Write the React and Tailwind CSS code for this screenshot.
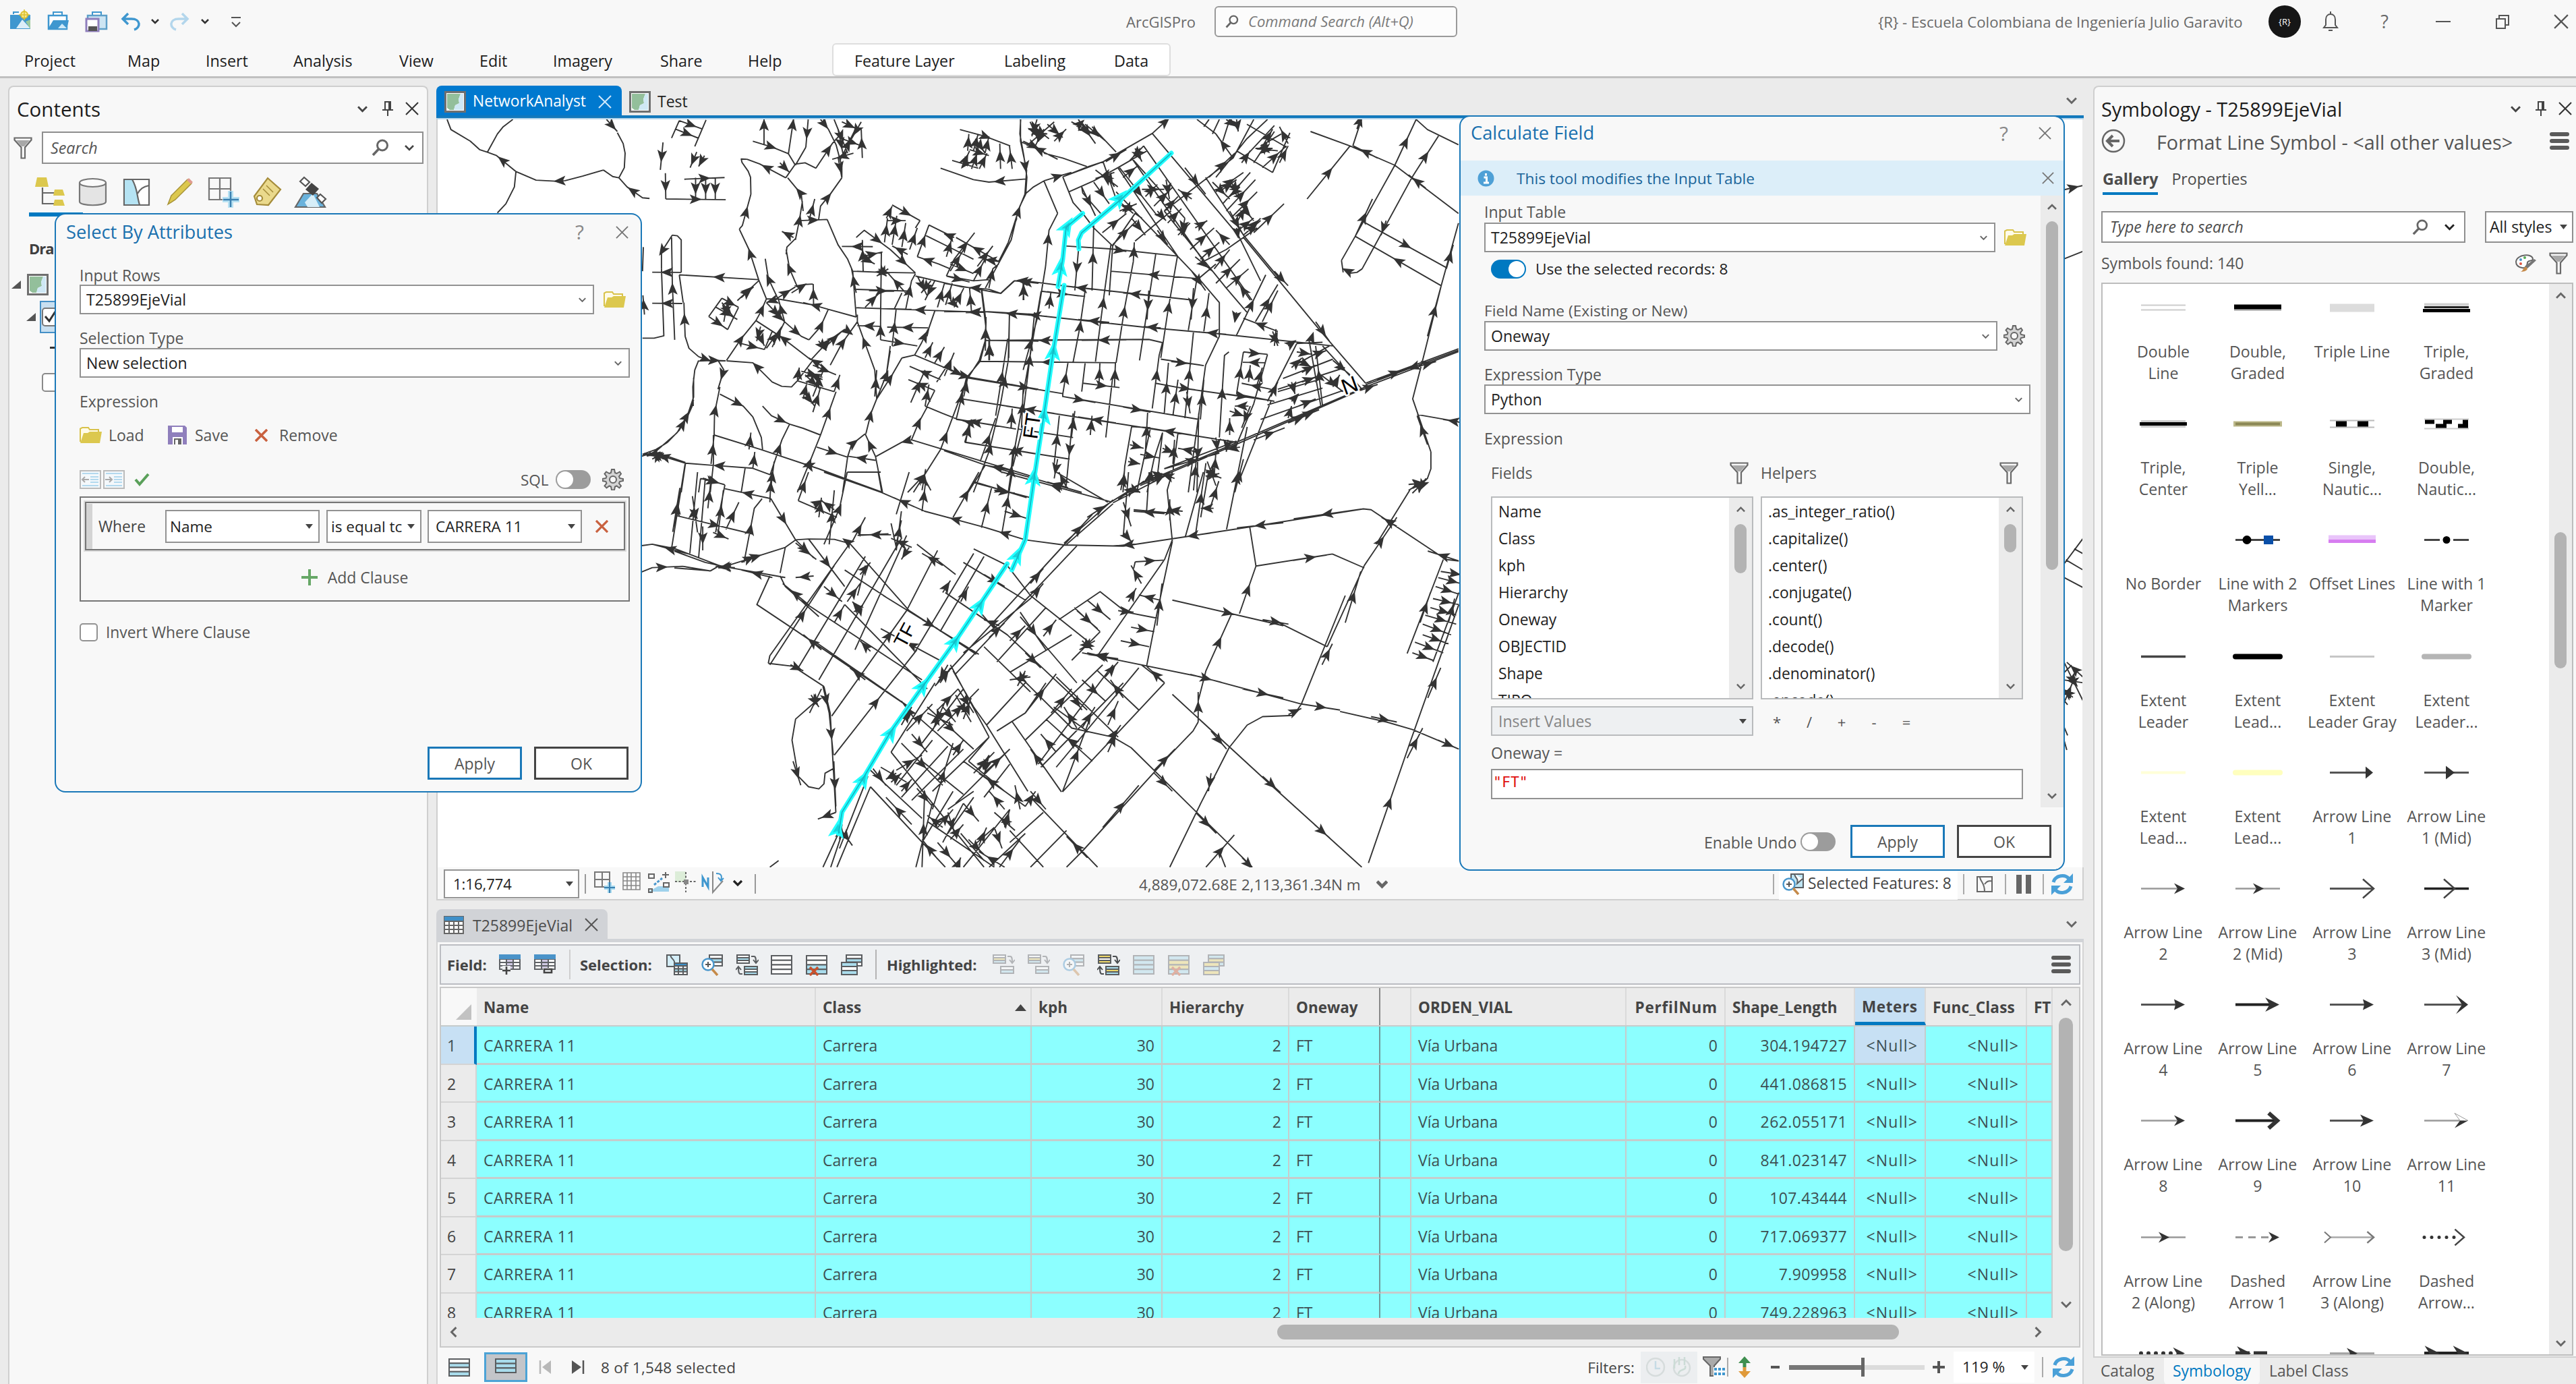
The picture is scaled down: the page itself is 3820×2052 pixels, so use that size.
import React from "react";

/* ---------- map data: "arrowCount x y x y ..." per tile ---------- */
const tiles = [
  {
    ox: 640, oy: 170, sx: 900 / 1568, sy: 560 / 1568,
    lines: `1 444 230 390 255 345 274 320 276 270 272 218 236
1 218 236 168 170 144 156
0 144 156 124 145 100 110 50 62 40 20
0 144 156 170 80 185 50 210 20
0 218 236 214 300 192 370 170 408
1 452 20 480 70
0 480 75 495 120 500 160 498 220 484 262
0 444 230 468 257 484 262
1 563 348 545 345 505 300 484 262
1 598 115 591 229
1 604 243 605 350
1 605 350 760 353
1 653 268 757 261
1 682 262 682 350
1 708 265 708 350
1 733 265 733 350
0 640 25 620 97
0 709 22 680 132
1 640 25 700 60
1 630 60 690 98
1 685 155 668 220
1 705 170 690 215
1 859 124 859 10 859 -40
1 830 110 880 135 922 162
0 922 162 940 210
1 922 162 935 20 935 -80
1 973 20 967 135
0 967 135 940 210
1 915 262 848 205 815 185
0 815 185 800 184 802 198 818 235 824 260 825 330
1 795 475 803 460 825 330
1 845 685 820 560 795 475
1 900 200 925 240
0 915 262 940 205 965 200 993 222
1 993 222 1035 120 1060 75
1 1005 20 1025 60
0 1025 60 1045 125 1060 215 1060 262
1 1050 175 1060 262
1 1000 435 1005 380 1030 330 1060 262
1 960 400 955 330 920 262
1 975 440 985 380 990 350
1 950 440 1022 435
0 1022 435 1050 540 1075 600 1088 650 1097 840
1 1097 740 1085 640
1 940 520 950 440 958 360
1 935 510 905 485
0 940 515 918 550 916 580
1 945 715 925 640 916 560
1 895 765 870 680 862 598
1 845 685 640 665
0 640 665 650 780
1 655 920 652 780
0 655 920 665 970 690 1005
1 690 1005 725 1025
1 700 1018 760 1022
1 645 655 570 654
1 648 784 570 783
0 645 655 645 520 635 503 622 500
1 622 500 594 570 594 640
0 594 640 600 918 575 928 545 928
1 628 935 622 700 620 510
0 547 550 545 650
1 550 830 546 750
1 762 1020 800 930 838 855
1 838 855 850 820 865 765
0 845 685 865 765 895 765
1 895 765 865 780
1 1025 808 985 790 960 780
0 895 765 985 790
0 1025 808 1097 840
1 890 765 940 715
1 930 740 965 705 985 703
1 987 790 986 703
1 975 935 1005 880 1025 808
1 912 860 955 920 975 935
1 790 772 845 690
1 800 760 832 715
1 716 838 765 892
0 716 838 750 762
1 750 762 793 800
0 793 800 765 892
1 735 800 790 850
1 750 780 780 840
1 765 770 755 860
1 865 780 912 860
1 885 820 912 860
1 912 860 895 760
0 838 855 905 925
1 980 1018 905 925 838 855
1 865 970 905 880
1 880 965 912 860
1 800 950 860 975
0 860 975 880 900
1 845 910 860 960
1 850 880 840 940
1 980 1018 1025 940 1068 890
1 1068 890 1085 910
1 1020 960 1060 900
1 1000 940 1020 980
1 1030 1040 1060 950 1100 860
1 905 1128 880 1110 830 1030 762 1022
0 905 1128 930 1130 945 1105
0 945 1105 985 1020
1 1010 1045 975 1010
1 985 1040 1045 1080
1 945 1100 950 1050
1 955 1065 1010 1090
1 965 1080 1005 1140
0 945 1105 1040 1150
1 1010 1100 985 1080 970 1070
1 1000 1135 1000 1080
0 1015 1050 985 1170
1 960 1180 970 1110
1 985 1235 1000 1160 1005 1130
1 960 1150 990 1210
1 1040 1150 1055 1080
1 1005 1330 1025 1240 1045 1150
1 855 1210 878 1250 925 1285 960 1302
0 960 1302 1005 1330
0 690 1020 680 1060 675 1130 676 1210
1 610 1360 640 1310 665 1240 676 1200
0 545 1410 580 1390 610 1360
1 740 1020 755 1060 740 1140
1 730 1330 731 1240 745 1130
1 745 1160 805 1210 830 1255
0 830 1255 852 1340 855 1390
1 722 1450 730 1330
1 820 1390 825 1320
0 730 1330 850 1390
1 1165 1568 1000 1470 850 1390 780 1355
1 656 1447 600 1420 545 1410
1 600 1430 560 1400
1 570 1430 600 1405
1 830 1468 720 1455 656 1447
0 830 1468 875 1495
1 875 1495 905 1350 925 1285
1 830 1468 835 1400
1 875 1568 885 1440
1 945 1568 975 1450 1005 1330
1 995 1380 1075 1422
1 1147 1435 1075 1418
1 1075 1420 1085 1370 1120 1325
1 1147 1420 1120 1325
0 1147 1420 1215 1360 1240 1350
1 1240 1350 1215 1360
0 720 1568 728 1450 728 1330
0 645 1568 656 1447
1 695 1510 755 1535
0 695 1510 690 1568
0 810 1468 800 1568
0 1147 1420 1165 1568
0 1075 1420 1062 1568
0 1088 650 1165 655 1250 657
1 1115 650 1113 520
1 1140 548 1060 547
1 1110 590 1165 570
1 1110 590 1145 620
0 1097 510 1118 480 1185 560
1 1118 480 1185 560
1 1185 560 1250 657
1 1170 530 1178 430
1 1190 540 1202 420
1 1215 550 1225 450
1 1235 560 1255 470
1 1175 430 1190 380
1 1190 375 1262 440
1 1178 440 1225 440
0 1262 440 1250 470
1 1230 580 1190 545
1 1255 590 1285 458
0 1285 458 1350 510
1 1350 510 1325 495
0 1275 500 1350 560 1400 600
1 1330 590 1345 510
1 1310 620 1255 590
0 1310 620 1340 640
1 1350 600 1403 490
1 1340 650 1375 560
1 1465 610 1355 510
1 1410 630 1450 545
1 1465 610 1425 600
0 1330 670 1400 690 1440 685
1 1340 620 1400 660
0 1330 670 1350 600
1 1330 670 1390 695
1 1400 690 1430 600
1 1440 720 1450 640 1465 620
0 1465 610 1490 530 1500 480 1512 430
1 1500 480 1520 380 1535 330
0 1250 670 1370 715 1440 725 1470 742 1505 690
1 1568 700 1505 690
1 1530 770 1528 690
1 1440 725 1370 715
0 1092 725 1240 733
1 1130 730 1195 733
0 1097 802 1240 808
1 1425 820 1100 802
1 1430 820 1380 822
1 1568 835 1430 818
0 1160 860 1162 570
1 1155 640 1175 670
1 1180 640 1150 670
1 1225 740 1180 660
0 1195 808 1215 740
1 1225 808 1240 690 1250 660
1 1120 800 1160 735
1 1255 670 1280 750
1 1290 690 1265 740
1 1300 690 1275 770
1 1307 800 1325 700
1 1328 790 1345 700
1 1350 800 1375 720
1 1395 820 1390 720
1 1340 770 1360 800
0 1420 725 1432 880 1430 940
1 1430 960 1432 860
1 1440 1020 1440 940
0 1430 940 1415 1020 1387 1090
0 1430 937 1568 940
0 1418 1024 1568 1027
0 1493 825 1490 1020 1470 1200
1 1283 885 1177 882
1 1160 879 1100 876
0 1300 815 1285 885 1280 920
1 1265 950 1283 890
1 1160 935 1255 960
1 1160 935 1160 860
1 1190 960 1200 810
0 1185 960 1175 1080
1 1145 1060 1120 950 1100 860 1100 830
0 1145 1060 1150 1180
1 1145 1170 1150 1060
1 1150 1180 1175 1080 1185 980
1 1150 1180 1190 1080 1215 1010
0 1215 1010 1248 998 1265 950
0 1248 998 1385 1090
1 1330 1050 1385 1090
1 1275 1010 1295 945
1 1300 1030 1325 965
1 1325 1085 1350 988
0 1305 1110 1345 1010
1 1315 1100 1235 1045
1 1300 1145 1232 1100
1 1238 1195 1275 1060
1 1275 1210 1285 1120
0 1300 1145 1280 1210
1 1122 1325 1135 1240 1150 1180
1 1240 1350 1258 1280 1280 1215
0 1275 1210 1320 1240 1360 1265
0 1360 1265 1510 1305
1 1410 1285 1370 1270
1 1245 1568 1315 1390 1385 1090
0 1387 1090 1568 1140
0 1370 1180 1568 1230
1 1375 1170 1385 1090
1 1380 1360 1390 1270
0 1380 1360 1568 1410
0 1240 1350 1568 1510
1 1400 1568 1440 1400 1470 1200
1 1470 1200 1490 1020
1 1490 1568 1505 1400 1525 1220
1 1530 1220 1550 950 1558 820
1 1497 1300 1500 1220
1 1365 62 1430 90 1495 130
1 1385 150 1388 80
1 1400 150 1412 80
1 1430 160 1440 90
1 1405 100 1430 160
1 1390 145 1440 170
1 1370 220 1390 150
1 1395 225 1412 150
1 1415 225 1435 160
0 1345 190 1412 222
1 1385 190 1370 220
1 1470 225 1468 120
1 1500 225 1493 130
1 1535 267 1440 280 1400 270
0 1400 270 1315 222
0 1522 20 1520 80 1530 170 1538 260 1535 330
1 1530 170 1538 260
1 1040 20 1060 100 1075 160
1 1060 30 1100 60
1 1110 30 1085 100
1 1060 100 1112 130
1 1113 180 1110 60
1 1055 190 1095 60
1 1050 60 1065 180
1 1090 160 1035 185
1 1230 1568 1270 1500 1290 1560`,
  },
  {
    ox: 1400, oy: 170, sx: 800 / 1568, sy: 560 / 1568,
    lines: `0 222 20 222 110 240 230 235 330
0 235 330 215 400 195 520 150 640 120 720
0 235 330 260 300 290 275
1 290 275 345 250 370 240
0 345 258 420 215 463 195
0 415 215 345 180 290 160
1 330 185 275 145 222 112
0 345 258 463 195 505 160
1 470 195 530 145
0 505 160 605 78
1 605 78 650 20 680 -20
1 240 130 320 30
1 250 30 275 110
1 245 60 300 80
1 290 60 265 130
1 300 40 345 95
1 320 110 355 60
1 260 50 305 100
1 270 20 255 90
1 230 110 290 150
1 370 30 450 90
1 385 50 405 25
1 390 20 440 120
1 410 40 470 110
0 430 50 500 155
0 290 275 330 410
1 295 630 305 480 330 410
0 295 630 270 850
0 345 258 375 365 403 410
0 403 410 435 470 490 545
0 363 320 435 275 505 220
1 505 300 440 230
0 505 220 590 150
1 400 300 440 420
1 435 280 480 370
0 400 300 403 325 455 410
1 510 220 620 420
1 620 400 645 440
1 620 480 650 540
0 505 220 680 590
0 545 180 760 620
1 555 140 575 195
1 580 130 540 190
1 520 260 565 210
0 462 195 500 350 550 410
1 470 240 495 300
1 495 240 440 265
1 545 380 520 400
1 510 400 560 370
1 460 490 530 410
1 490 540 560 440
1 545 430 585 500
0 555 525 660 400
0 490 545 555 410 575 430
0 500 320 680 590 740 680
1 720 650 760 730
0 740 680 800 780 800 830
0 800 830 800 920 760 1040
0 740 680 790 620
0 605 78 855 500
1 700 220 760 330
0 580 130 895 770
0 545 180 700 430
1 585 340 620 290
1 610 380 665 300
1 640 400 680 340
1 575 310 640 310
1 645 270 655 350
1 650 450 690 390
1 680 500 715 450
1 700 430 690 500
1 715 560 785 470
1 730 470 765 440
1 745 600 800 530
1 730 590 780 650
1 785 640 830 560
1 790 700 860 600
1 820 720 885 640
1 890 770 850 690
0 640 400 820 720 880 820
1 830 540 790 480
0 740 620 820 560 910 470
0 640 400 740 290
1 720 350 680 310
0 740 290 840 180 900 20
1 770 260 845 160
0 760 260 870 500
1 780 280 830 350
1 790 320 870 240
1 810 370 890 240
1 820 400 905 270
1 830 270 860 340
1 800 320 850 270
1 860 300 830 340
1 840 420 910 320
1 850 450 880 370
1 860 370 900 440
1 870 500 920 440
1 885 480 920 430
1 830 400 870 500
1 855 480 900 430
1 900 490 988 370
0 870 500 980 690
1 960 650 1000 710
0 855 500 920 690
0 870 510 1095 900
1 1080 860 1120 940
0 1095 900 1225 1115
1 850 470 855 510
1 835 170 790 80
0 790 80 735 20
0 755 50 770 20
0 780 80 800 20
0 810 110 830 20
1 820 20 850 50
1 850 20 855 70
0 790 260 880 100 940 20
0 850 150 955 240
0 880 40 995 135
0 885 160 960 45
1 865 200 890 150
1 900 200 960 70
0 920 130 980 80
1 905 140 970 150
1 955 140 905 140
1 925 220 995 130
1 930 120 955 60
0 955 240 1005 75
1 975 200 1000 130
1 1000 120 975 50
0 1065 70 1180 130
1 1055 350 1180 130
0 1188 130 1213 20
1 1200 60 1216 -10
1 1260 180 1190 130
0 1180 130 1310 210
0 1310 210 1495 410
1 1400 305 1350 250
0 1155 605 1195 505 1310 210
1 1310 210 1372 20
0 1372 20 1405 62 1495 125
1 1360 260 1437 88
0 1360 260 1215 640
1 1285 440 1270 500
0 1215 640 1200 655 1180 658
1 1185 658 1160 640
0 1155 605 1160 655
1 1195 505 1245 350
1 1225 450 1460 635
1 1445 710 1195 505
0 1390 1025 1445 710 1495 450
1 1460 640 1480 540
1 1405 920 1445 710
0 1390 1025 1362 1180 1415 1400
1 1405 1370 1375 1250
0 1415 1400 1415 1470 1405 1510 1350 1560
1 1350 1535 1405 1530
1 1400 1510 1380 1568
0 1375 1245 1495 1275
1 1510 1280 1450 1265
0 350 545 490 558 678 587
1 490 558 530 568
1 392 540 380 730
1 430 730 435 460
0 490 545 480 750
1 440 1025 465 750 485 540
1 500 1030 525 800 550 610
1 550 610 553 530
0 568 1020 615 580
1 595 730 590 850
1 630 1010 650 820 678 590
0 735 680 710 895
1 725 720 718 850
1 755 900 770 740
1 733 680 485 650
0 725 770 355 712
1 590 750 520 740
1 430 725 370 715
0 355 712 225 688 205 690 165 742 80 720 0 700
1 240 692 215 688
1 230 770 232 690
0 282 733 410 755
1 305 805 310 740
1 300 735 390 752
0 282 733 250 1000 230 1160
1 375 1028 395 880 410 730
0 1130 960 800 910 580 882
1 630 885 580 880
1 480 862 390 850
0 580 882 280 835
1 300 838 230 828
0 270 830 130 818
0 130 818 0 818
1 120 820 60 818
1 820 912 740 902
0 110 730 122 860 120 940
1 120 980 122 840
1 132 1020 132 930
0 120 937 595 933 637 947
1 330 938 255 937
1 530 935 400 937
0 105 1024 500 1030
1 310 1028 290 1028
0 190 820 188 1010
1 150 1250 185 930
0 120 940 105 1024 65 1092
1 30 1075 90 1095
0 65 1092 345 1158 345 1170 740 1265
1 195 1120 270 1142
1 345 1170 440 1195
1 520 1213 600 1235
1 320 1240 180 1210
0 50 1180 850 1360
1 500 1280 390 1255
1 720 1330 590 1300
1 35 1265 65 1092
1 230 1060 270 850
1 225 1300 230 1140
1 345 1160 360 1030
1 450 1125 453 1030
1 495 1130 498 1030
0 410 1030 400 1150
1 405 1115 510 1133
0 490 1090 470 1340
0 630 1015 755 1042
1 660 1025 720 1035
1 605 1220 625 1000 635 945
0 615 1115 690 1135 950 1187
1 670 1130 730 1142
1 820 1160 910 1178
0 760 1040 735 1300 710 1568
1 640 1240 652 1030
1 665 1250 680 1100
1 700 1260 725 900
1 705 1150 715 1240
1 745 1265 755 1100
1 800 1340 815 1000 828 985
1 850 1160 870 985
0 870 985 940 995
1 880 988 925 993
1 935 1030 868 1028
0 940 995 900 1200 850 1370
1 885 1110 890 1040
1 910 1120 925 1050
1 950 1140 865 1115
0 850 1160 960 1190
1 885 1210 845 1210
1 830 1230 880 1255
1 830 1330 830 1260
1 890 1210 865 1300
0 940 1190 1025 950
1 950 1170 970 1110
0 970 1150 1090 1100
1 955 900 970 960
1 960 960 965 890
1 970 900 870 845
1 850 820 845 860
1 850 915 935 665
1 905 860 970 705
1 925 860 970 730
0 1025 950 1100 945
1 1000 960 1020 940
1 1065 940 1072 910
0 1060 930 1095 1210
1 1100 1210 1080 960
1 1025 985 1070 995
1 1070 1000 1110 980
1 1010 1050 1040 1010
0 1020 1040 1120 960
1 1030 1020 1070 1050
0 985 1095 1130 1015
1 1040 1070 1080 1040
0 970 1140 1165 1050
1 1040 1110 1080 1090
0 940 1205 1100 1135
1 1010 1110 1020 1160
0 920 1265 1160 1145
1 1000 1260 1010 1210
1 1130 1130 1150 1080
1 1095 1080 1160 1150
1 1130 1020 1180 1080
0 1100 960 1215 1140
1 1010 1190 1030 1160
1 1030 1210 1080 1180
0 1225 1115 1495 972
0 1225 1122 1495 978
0 1225 1130 1495 984
1 1260 1100 1360 1045
1 1390 1035 1340 1060
1 1380 1045 1430 1025
1 1210 1145 1260 1120
1 1030 1260 1090 1225
1 1000 1280 1060 1245
0 850 1360 1225 1130
1 900 1350 990 1300
0 850 1368 1215 1140
0 850 1368 570 1540
0 850 1362 560 1540
0 850 1355 640 1470
1 640 1470 800 1405
1 860 1380 820 1390
1 790 1340 795 1400
1 825 1350 820 1400
0 560 1540 530 1568
1 740 1240 735 1568
1 725 1560 735 1400
1 785 1500 790 1400
1 845 1568 870 1430
0 860 1510 950 1190
1 590 1568 610 1430
0 610 1430 635 1320
1 520 1568 525 1460
0 525 1460 545 1295
0 545 1295 600 1300
1 585 1400 592 1230
0 600 1300 560 1568
1 540 1370 580 1385
1 535 1440 570 1450
1 570 1410 625 1425
1 635 1385 670 1405
1 735 1400 680 1385
0 665 1480 680 1320
1 665 1450 670 1350
0 620 1500 635 1320
1 600 1500 645 1490
1 670 1510 630 1490
1 540 1550 570 1568
1 765 1440 790 1540
1 760 1500 800 1490
1 375 1240 355 1540
1 370 1340 380 1230
1 425 1330 430 1250
1 320 1450 335 1250
0 215 1305 375 1340
1 150 1290 35 1265
1 195 1300 198 1220
1 365 1430 60 1360
1 60 1360 80 1265
1 105 1440 150 1260
1 330 1430 320 1510
1 190 1475 120 1455
0 0 1395 120 1455 260 1510 400 1568
1 360 1548 300 1525
1 190 1560 200 1400
0 200 1460 230 1290
0 120 1455 70 1568
1 90 1525 240 1590`,
  },
  {
    ox: 1000, oy: 700, sx: 1200 / 1568, sy: 700 / 1568,
    lines: `0 0 262 60 300 100 315 215 350
1 110 312 85 318
0 0 318 70 328 88 310
1 100 312 215 250
0 215 250 205 335
1 130 300 160 275
0 235 225 215 250
0 60 20 47 285
1 55 20 98 42
0 98 42 80 200
1 75 200 105 222
1 30 270 45 0
1 65 120 70 40
1 85 200 95 60
1 100 190 125 100
1 5 145 150 205
1 187 88 98 55
1 0 180 10 60
1 135 300 155 120 170 88
1 55 180 55 260
1 35 80 45 200
1 185 100 188 0
1 187 88 235 225
1 240 95 260 0
0 240 95 315 150
1 270 110 285 95
1 280 150 285 85
1 310 125 285 95
1 300 240 310 60
0 235 225 260 222 310 223 340 237
1 340 237 330 225
0 290 0 402 68 485 130 540 155
0 402 68 395 0
1 465 115 425 85
1 605 185 485 130
0 605 185 680 225 755 242 870 246
1 680 225 600 183
0 870 246 1115 182 1335 122 1350 125 1495 290 1520 295
1 910 236 850 246
1 1040 202 970 220
1 1180 168 1090 185
1 1330 123 1200 155
1 1520 295 1460 262
1 1400 180 1370 150
1 290 240 320 120 335 0
0 335 0 400 0
0 455 0 430 140
1 480 130 487 30
1 480 60 487 -10
1 430 240 440 160
0 440 130 430 260
1 540 150 590 0
1 595 185 615 50
1 620 60 660 70
0 580 35 690 85
1 635 200 655 0
1 640 130 685 155
0 740 0 840 100
1 845 98 635 0
1 760 50 745 0
1 755 242 810 140
1 800 150 850 95
0 755 236 850 92
0 760 240 850 105
0 850 95 940 0
0 850 102 960 5
1 860 90 910 30
1 920 40 960 0
1 865 60 872 0
1 870 100 885 180
1 870 200 885 230
0 880 0 870 210
0 890 125 955 135
1 950 138 890 130
1 985 130 955 125
1 960 160 960 90
0 965 230 955 60 965 0
0 920 0 915 130
0 990 215 1025 0
1 1010 205 1030 -30
0 1020 150 1035 0
1 1045 120 1020 120
1 1040 110 1055 30
1 1070 190 1110 -150
1 1030 0 1060 20
0 1115 182 1127 312
0 1127 312 1275 272
1 1200 293 1265 275
0 1275 272 1337 318
1 1095 470 1127 312
1 1030 660 1080 470
0 1030 660 1015 760 1015 830
1 1015 830 1015 730
0 1015 830 1005 860 960 940
1 930 990 970 920
0 960 940 790 1260
1 830 1180 900 1040
1 965 425 1180 510
1 1140 490 1190 505
0 1160 490 1265 580
0 1215 770 1300 410
1 1255 640 1275 570
1 1300 500 1330 330
0 1265 580 1337 310
1 1337 310 1400 150
0 1360 240 1425 60
1 1430 70 1460 20
1 1425 40 1460 35
0 790 600 1020 680
1 850 620 800 600
1 1000 672 1060 698
0 1020 680 1215 770
1 1100 720 1180 750
1 1215 770 1290 790
1 1350 812 1400 830
0 1290 795 1380 830 1430 855 1520 920
1 1480 890 1520 920
0 1215 770 1200 808 1140 812 1110 840 1075 915
1 1190 805 1215 785
0 965 738 1150 1030
1 1040 860 1070 920
0 1150 1030 1332 1312
1 1140 1010 1175 1065
1 1240 1170 1270 1215
0 1075 915 1020 1100
1 1040 1000 1035 1060
0 1020 1100 960 1312
0 850 880 885 915 1120 1312
1 930 1000 965 1060
1 1010 1130 1050 1200
1 1100 1280 1125 1325
1 1345 1298 1425 900
0 1425 900 1520 440
1 1420 950 1450 850
1 1460 750 1485 650
1 1030 1312 1085 1205
0 1055 1255 1068 1312
0 1420 602 1490 290
1 1445 500 1465 400
0 1470 630 1520 400
1 1500 500 1512 420
1 1485 330 1540 345
1 1480 350 1535 375
1 1475 380 1520 405
1 1470 420 1520 440
1 1465 450 1515 475
1 1455 475 1515 505
1 1450 505 1505 540
1 1450 540 1500 570
1 1435 565 1490 600
1 1430 600 1470 625
1 893 298 950 292
1 905 370 885 310
0 965 225 950 290 820 610
0 893 298 890 320
1 880 430 895 385
0 965 230 935 470 915 645
1 935 510 945 370
1 940 425 900 408
1 860 460 890 465
0 860 460 935 485
1 885 515 930 530
1 865 560 920 580
0 745 490 825 397 875 465
0 775 450 825 530
1 800 425 845 490
1 780 460 820 520
0 825 530 770 625
1 790 560 810 590
1 815 560 785 590
1 860 620 800 605
0 800 560 690 410 645 310
1 690 420 715 370
1 600 340 640 380
0 560 300 680 425
0 680 425 695 400
0 580 255 645 310
1 690 370 715 320
0 780 245 545 670
0 755 242 505 710
1 610 550 640 500
1 630 510 600 490
0 595 470 620 520
0 560 600 690 420
1 680 600 710 650
0 600 580 690 730
0 670 680 770 850 850 880
1 670 465 720 590
0 625 630 720 450
1 715 545 740 490
1 650 560 680 510
0 650 665 770 540
0 670 480 780 700
1 770 740 790 790
0 740 680 860 880
0 525 400 645 540 800 790
0 585 605 545 560
1 480 490 510 520
0 545 560 455 460 340 237
1 520 310 480 270
0 545 340 470 240
1 460 250 420 220
0 430 250 420 170
1 260 222 330 380
0 330 325 410 415
0 405 410 590 605
1 235 235 275 290
1 235 225 270 285
0 330 440 490 720
1 360 460 345 430
1 520 630 400 520
0 480 690 240 420
0 455 780 270 560
1 380 595 360 560
1 370 690 340 650
0 230 520 160 440 185 345
0 230 520 450 775
1 285 590 250 540
1 260 440 210 370
0 205 345 215 380 280 480
1 290 380 325 430
1 270 345 235 350
1 190 350 130 325
1 185 640 310 310
0 240 650 370 280
1 310 500 330 440
1 280 690 440 220
1 305 810 450 460 510 260
1 310 940 470 590
1 360 340 380 300
0 355 410 370 310
0 340 237 185 610 182 635
0 182 635 230 645 290 712
1 225 640 250 660
1 335 430 360 370
0 350 590 450 210
0 465 600 580 270
0 515 530 600 280
1 555 430 570 380
1 520 400 535 360
0 355 210 415 205
1 420 208 360 208
1 455 250 440 290
1 345 230 370 150
0 290 712 302 800 313 1130
1 288 712 300 800
1 300 800 308 940
1 309 960 313 1110
0 275 760 235 820 228 890 240 1010 260 1045 280 1052 290 1035 292 1000 308 985
1 285 720 262 800
1 265 740 280 780
1 230 960 245 1040
1 313 1130 278 1152
0 185 1312 202 1290
0 318 1200 288 1312
0 325 1200 303 1312
0 380 1045 315 1312
0 375 1010 320 1250
1 320 1180 345 1240
1 320 1220 325 1170
0 380 1045 525 1312
1 460 1170 410 1080
1 480 1312 485 1060
0 468 1312 500 1100
0 420 930 505 700
0 420 930 600 1312
1 460 870 490 930
0 430 1040 500 890
1 440 900 520 1040
0 480 960 560 1070
0 440 1080 530 910
0 460 1090 560 920
1 540 940 560 890
0 500 1060 610 880
0 380 990 480 1150
1 385 985 410 1040
1 430 1000 410 1020
0 450 1030 400 980
1 420 1030 440 1000
1 440 1060 460 1020
1 470 1050 500 1110
1 500 1120 540 900
0 530 1120 580 1060
1 430 990 480 940
1 490 780 580 920
0 470 810 550 930
0 480 900 560 720
1 510 860 590 720
1 505 840 510 800
1 520 780 545 830
1 550 720 580 800
1 545 740 575 830
1 560 820 575 750
0 490 800 540 840
1 450 860 500 770
1 440 840 460 780
1 470 830 440 760
1 525 760 500 860
1 530 640 510 700
1 515 700 535 650
0 540 660 580 780 605 840
1 510 790 550 720
0 535 640 610 880
0 605 840 685 1060
0 605 840 680 700
1 690 680 650 690
1 680 660 665 710
0 625 860 680 800 720 700
1 680 800 740 670
0 655 830 750 1062
1 715 980 690 920
1 752 1062 805 820
0 752 1062 950 700
0 950 700 905 640
1 950 700 915 645
0 710 980 870 700
1 730 800 770 720
0 680 890 830 640
1 740 930 710 870
0 705 970 850 640
1 835 680 860 630
0 735 780 800 860
0 720 820 810 960
1 790 920 750 870
0 740 980 900 650
1 790 850 815 780
1 840 900 865 840
1 840 930 860 850
1 870 750 845 690
0 900 790 820 660
1 790 690 835 760
1 780 850 755 780
1 840 840 860 760
0 610 880 570 960
0 570 960 640 1060
1 590 990 610 940
1 600 1000 650 920
1 610 940 600 1010
1 580 1000 620 930
0 545 1100 650 920
0 600 1080 650 970
1 640 1060 590 1000
0 680 1110 560 960
1 640 1120 610 1060
1 680 1110 700 1060
1 670 1120 660 1040
1 690 1060 720 1120
0 690 1080 820 1312
1 800 1280 760 1210
0 560 1312 650 1120
1 560 1100 590 1160
0 530 1200 580 1080
0 520 1230 560 1100
1 510 1180 540 1120
1 530 1130 545 1210
0 480 1230 540 1060
1 510 1285 480 1220
0 490 1160 620 1312
1 520 1180 490 1140
0 555 1200 600 1290
1 535 1220 560 1170
0 580 1240 620 1180
1 590 1240 605 1180
1 620 1180 635 1250
1 570 1220 600 1270
1 545 1320 555 1280
1 510 1230 545 1300
0 610 1312 680 1200
1 630 1312 670 1220
1 640 1312 590 1260
0 650 1230 715 1130
1 660 1190 620 1130
1 640 1180 650 1120
0 690 1312 760 1190
0 650 1190 715 1312
0 760 1312 790 1260`,
  },
  {
    ox: 0, oy: 560, sx: 1280 / 1568, sy: 640 / 1568,
    lines: `0 1166 285 1190 270 1245 308
1 1200 270 1175 285
1 1215 290 1170 275
0 1245 308 1220 620
1 1222 560 1235 400
0 1166 610 1185 605 1225 620
1 1250 640 1185 605
0 1225 620 1310 685
1 1166 705 1185 690 1240 685
0 1240 685 1290 702 1305 685
1 1335 690 1300 685
0 1260 0 1260 70 1250 130
1 1230 200 1250 130 1260 80
0 1190 270 1230 200`,
  },
  {
    ox: 2150, oy: 160, sx: 950 / 1568, sy: 620 / 1568,
    lines: `1 1500 308 1552 290
0 1500 568 1549 538`,
  },
  {
    ox: 2150, oy: 700, sx: 950 / 1568, sy: 680 / 1568,
    lines: `0 1500 320 1549 228
0 1528 262 1549 278
0 1508 300 1549 334
0 1503 360 1549 394
1 1549 700 1510 650
1 1549 720 1500 710
1 1500 640 1549 780
1 1500 800 1530 700
1 1525 770 1500 740
0 1500 690 1522 660
0 1503 870 1512 900
0 1503 780 1512 795
0 1503 915 1510 950`,
  },
];

const fmt = (n) => n.toFixed(1);

function headPath(x, y, a, s) {
  const c = Math.cos(a), d = Math.sin(a);
  const p = (u, v) => fmt(x + u * c - v * d) + " " + fmt(y + u * d + v * c);
  return "M" + p(10 * s, 0) + "L" + p(-10 * s, 8 * s) + "L" + p(-5.5 * s, 0) + "L" + p(-10 * s, -8 * s) + "Z";
}

function buildStreets() {
  let roads = "";
  let heads = "";
  for (const t of tiles) {
    for (const row of t.lines.split("\n")) {
      const v = row.trim().split(/\s+/).map(Number);
      const n = v[0];
      const pts = [];
      for (let i = 1; i + 1 < v.length; i += 2) pts.push([t.ox + v[i] * t.sx, t.oy + v[i + 1] * t.sy]);
      roads += "M" + pts.map((p) => fmt(p[0]) + " " + fmt(p[1])).join("L");
      if (!n) continue;
      const seg = pts.slice(1).map((p, i) => Math.hypot(p[0] - pts[i][0], p[1] - pts[i][1]));
      let goal = seg.reduce((a, b) => a + b, 0) / 2;
      for (let i = 0; i < seg.length; i++) {
        if (goal <= seg[i] || i === seg.length - 1) {
          const k = seg[i] ? goal / seg[i] : 0;
          const [x0, y0] = pts[i], [x1, y1] = pts[i + 1];
          heads += headPath(x0 + (x1 - x0) * k, y0 + (y1 - y0) * k, Math.atan2(y1 - y0, x1 - x0), 0.9);
          break;
        }
        goal -= seg[i];
      }
    }
  }
  return { roads, heads };
}
const streets = buildStreets();

const route =
  "M1605.6 316.4L1581 337L1576 384L1569 425M1737 227L1663 295L1604 345L1599 356L1600 369M1578 423L1562 520L1548 615L1534 706L1520.4 800L1500.5 845M1493.6 836L1417 950L1370.4 1015L1321.4 1084L1279.3 1155L1248.7 1204L1243.4 1236";
const routeHeads = [
  [1583, 335, -60], [1572.5, 395, -84], [1661, 293, -48], [1562, 520, -84], [1548, 615, -83], [1533, 706, -83],
  [1509, 822, -65], [1454, 896, -58], [1417, 950, -56], [1369, 1016, -56], [1322, 1085, -58], [1281, 1154, -60], [1242, 1228, -80],
].map((h) => headPath(h[0], h[1], (h[2] * Math.PI) / 180, 1.1)).join("");

function StreetMap() {
  return (
    <svg viewBox="649 177 2439 1109" className="block h-[1109px] w-[2439px] bg-white">
      <path d={streets.roads} fill="none" stroke="#333" strokeWidth="1.9" strokeLinejoin="round" />
      <path d={streets.heads} fill="#333" />
      <path d={route} fill="none" stroke="#2ff" strokeWidth="7" strokeLinecap="round" strokeLinejoin="round" />
      <path d={routeHeads} fill="#19d2d8" stroke="#2ff" strokeWidth="3" />
      <path d={route} fill="none" stroke="#12b9c4" strokeWidth="1.8" />
      {[["translate(1538 652) rotate(-82)", "FT", "31"], ["translate(1342 962) rotate(-62)", "TF", "29"], ["translate(1994 586) rotate(-20)", "N", "33"]].map(([pos, label, size]) => (
        <g key={label} transform={pos} fontFamily="Liberation Sans, sans-serif" fontSize={size}>
          <text fill="#fff" stroke="#fff" strokeWidth="5" strokeLinejoin="round" aria-hidden="true" paintOrder="stroke">
            <tspan fill="#000">{label}</tspan>
          </text>
        </g>
      ))}
    </svg>
  );
}

/* ---------- small icons ---------- */
const Chev = ({ c = "#444", s = 14, w = 2.6, up, left, right }) => (
  <svg width={s} height={s} viewBox="0 0 14 14" className="shrink-0">
    <path d={up ? "M1 10l6-6 6 6" : left ? "M10 1L4 7l6 6" : right ? "M4 1l6 6-6 6" : "M1 4l6 6 6-6"} fill="none" stroke={c} strokeWidth={w} />
  </svg>
);
const Cross = ({ c = "#555", s = 20, w = 2 }) => (
  <svg width={s} height={s} viewBox="0 0 20 20" className="shrink-0">
    <path d="M1 1l18 18M19 1L1 19" fill="none" stroke={c} strokeWidth={w} />
  </svg>
);
const Caret = ({ c = "#444" }) => (
  <svg width="11" height="7" viewBox="0 0 11 7" className="shrink-0"><path d="M0 0h11L5.500 7z" fill={c} /></svg>
);
const Pin = () => (
  <svg width="16" height="22" viewBox="0 0 16 22" className="shrink-0" fill="none" stroke="#444" strokeWidth="2"><path d="M4 1h8v12H4zM10 1v12M0 13h16M8 13v9" /></svg>
);
const Funnel = () => (
  <svg width="28" height="33" viewBox="0 0 28 33" className="shrink-0"><path d="M1.500 1.500h25v3L17 15.500V31.500h-5.500V15.500L1.500 4.500z" fill="#f8f8f8" stroke="#6a6a6a" strokeWidth="2.200" /><path d="M4 5h20l-8 9h-4z" fill="#a8a8a8" /></svg>
);
const Mag = ({ s = 26, c = "#666" }) => (
  <svg width={s} height={s} viewBox="0 0 26 26" className="shrink-0" fill="none" stroke={c}><circle cx="16" cy="9.500" r="7.500" strokeWidth="3" /><path d="M10.500 15L2 24" strokeWidth="3.600" /></svg>
);
const Folder = () => (
  <svg width="33" height="24" viewBox="0 0 33 24" className="shrink-0"><path d="M1 22V2.500L4 1h9l2 3h13v6" fill="#fffbe8" stroke="#d8c24a" strokeWidth="2" /><path d="M6 9h6l3-2h18l-3 17H1z" fill="#dcc84e" /></svg>
);
const Gear = () => (
  <svg width="32" height="32" viewBox="0 0 32 32" className="shrink-0"><path d="M14 1h4l1 5 2.500 1L26 4.500l2 3-3 4 1 2.500 5 1v3l-5 1-1 2.500 3 4-2.500 3-4-3-2.500 1-1 5h-4l-1-5-2.500-1-4 3-3-3 3-4-1-2.500-5-1v-3l5-1 1-2.500-3-4 2.500-3 4.500 2.500L13 6z" fill="#d4d4d4" stroke="#666" strokeWidth="2" /><circle cx="16" cy="16" r="5" fill="#f8f8f8" stroke="#666" strokeWidth="2" /></svg>
);
const Toggle = ({ on }) => (
  <div className={on ? "flex h-[28px] w-[52px] shrink-0 justify-end rounded-full bg-[#0079c1] p-[2px]" : "flex h-[28px] w-[52px] shrink-0 rounded-full bg-[#9c9c9c] p-[2px]"}>
    <div className="h-6 w-6 rounded-full bg-white" />
  </div>
);
const MapIcon = () => (
  <svg width="32" height="32" viewBox="0 0 32 32" className="shrink-0"><rect x="1.500" y="1.500" width="29" height="29" fill="#fff" stroke="#6f6f6f" strokeWidth="3" /><path d="M4 4h20l-3 8 1 6-6 3-2 7H8l-4-3z" fill="#93bf9b" /><path d="M24 4h4v24H14l2-7 6-3-1-6z" fill="#cfe8f5" /></svg>
);
const Floppy = () => (
  <svg width="28" height="28" viewBox="0 0 28 28" className="shrink-0"><path d="M0 0h25l3 3v25H0z" fill="#8f7fbc" /><path d="M6 2h16v8H6z" fill="#fff" /><path d="M7 17h15v11H7z" fill="#fff" /><path d="M9 19h11v9H9z" fill="#666" /><path d="M11 21h4v7h-4z" fill="#fff" /></svg>
);
const Refresh = () => (
  <svg width="34" height="34" viewBox="0 0 34 34" className="shrink-0" fill="none" stroke="#4aa0d8" strokeWidth="5"><path d="M4 14C7 3 22 2 27 9M30 20C27 31 12 32 7 25" /><path d="M33 1v14H19zM1 33V19h14z" fill="#4aa0d8" stroke="none" /></svg>
);
const Burger = () => (
  <div className="flex shrink-0 flex-col gap-[4px]">
    <div className="h-[6px] w-[29px] rounded-sm bg-[#5a5a5a]" /><div className="h-[6px] w-[29px] rounded-sm bg-[#5a5a5a]" /><div className="h-[6px] w-[29px] rounded-sm bg-[#5a5a5a]" />
  </div>
);
const Sheet = ({ minus }) => (
  <svg width="32" height="30" viewBox="0 0 32 30" className="shrink-0"><path d="M1 1h30v21H1z" fill="#fff" /><path d="M11 7h10v14H11z" fill="#cfc8e2" /><path d="M1 7h30M1 12h30M1 17h30M1 22h30M11 1v21M21 1v21M1 1h30v21H1z" fill="none" stroke="#5f6266" strokeWidth="2" /><path d="M0 0h32v7H0z" fill="#4a93c9" /><path d={minus ? "M13 20h14v9H13z" : "M5 17h12v13H5z"} fill="#eef0f2" /><path d={minus ? "M15 22h11v5H15z" : "M11 18v12M5 24h12"} fill="none" stroke="#444" strokeWidth="2.600" /></svg>
);
const Rows = ({ x = 0, y = 0, w = 30, h = 27, f = ["#fff", "#fff", "#fff", "#fff"] }) => {
  const step = h / f.length;
  return (
    <g stroke="#5a5d60" strokeWidth="2">
      {f.map((c, i) => <rect key={i} x={x} y={y + i * step} width={w} height={step} fill={c} />)}
    </g>
  );
};
const B = "#a9dcec", Y = "#ecd66a", W = "#fff";
const TIcon = ({ k, faded }) => (
  <svg width="34" height="33" viewBox="-1 -1 34 33" className={faded ? "shrink-0 opacity-40" : "shrink-0"}>
    {k === "map" && (<><path d="M1 1h19v17H1z" fill="#d4eef8" stroke="#5a5d60" strokeWidth="2" /><path d="M6 1c2 8 8 5 6 17" fill="none" stroke="#5a5d60" strokeWidth="2" /><Rows x={12} y={13} w={19} h={17} f={["#3c8fc8", W, B, W]} /><path d="M18 17v13M25 17v13" stroke="#5a5d60" strokeWidth="2" /></>)}
    {k === "mapzoom" && (<><path d="M13 1h18v20H13z" fill="#bfe5f3" stroke="#5a5d60" strokeWidth="2" /><path d="M18 1c2 8 6 5 4 14l8-7" fill="#fff" stroke="#5a5d60" strokeWidth="2" /><circle cx="10" cy="16" r="8.500" fill="#fff" stroke="#4a97cc" strokeWidth="2.500" /><path d="M6 16h8M10 12v8" stroke="#555" strokeWidth="2" /><path d="M16 22l8 9" stroke="#c58a4a" strokeWidth="3.500" /></>)}
    {k === "zoom" && (<><Rows x={12} y={1} w={19} h={16} f={[W, B, W]} /><circle cx="10" cy="15" r="8.500" fill="#fff" stroke="#4a97cc" strokeWidth="2.500" /><path d="M6 15h8M10 11v8" stroke="#555" strokeWidth="2" /><path d="M16 22l8 9" stroke="#c58a4a" strokeWidth="3.500" /></>)}
    {k === "switch" && (<><Rows x={1} y={1} w={18} h={12} f={[W, B, W]} /><Rows x={12} y={18} w={19} h={12} f={[B, W, B]} /><path d="M22 3h4c3 0 3 4 3 9m-4-4l4 5 4-5M9 29H6c-3 0-3-5-3-10m-4 4l4-5 4 5" fill="none" stroke="#5a5d60" strokeWidth="2" /></>)}
    {k === "switchY" && (<><Rows x={1} y={1} w={18} h={12} f={[Y, W, Y]} /><Rows x={12} y={18} w={19} h={12} f={[B, Y, B]} /><path d="M22 3h4c3 0 3 4 3 9m-4-4l4 5 4-5M9 29H6c-3 0-3-5-3-10m-4 4l4-5 4 5" fill="none" stroke="#4a4d50" strokeWidth="2" /></>)}
    {k === "down" && (<><Rows x={1} y={1} w={18} h={12} f={[W, Y, B]} /><Rows x={12} y={18} w={19} h={10} f={[W, B]} /><path d="M22 3h4c3 0 3 4 3 9m-4-4l4 5 4-5" fill="none" stroke="#5a5d60" strokeWidth="2" /></>)}
    {k === "rows" && <Rows x={1} y={2} />}
    {k === "rowsB" && <Rows x={1} y={2} f={[B, B, B, B]} />}
    {k === "del" && (<><Rows x={1} y={2} f={[W, W, B, B]} /><path d="M6 19l12 12M18 19L6 31" stroke="#c9512c" strokeWidth="3.500" /></>)}
    {k === "delY" && (<><Rows x={1} y={2} f={[B, Y, Y, B]} /><path d="M6 19l12 12M18 19L6 31" stroke="#c9512c" strokeWidth="3.500" /></>)}
    {k === "copy" && (<><Rows x={8} y={1} w={23} h={16} f={[W, B, W]} /><Rows x={1} y={12} w={23} h={18} f={[B, W, B]} /></>)}
    {k === "copyY" && (<><Rows x={8} y={1} w={23} h={16} f={[B, Y, B]} /><Rows x={1} y={12} w={23} h={18} f={[Y, B, Y]} /></>)}
  </svg>
);
const ViewIcon = ({ b }) => (
  <svg width="32" height="27" viewBox="-1 -1 32 27" className="shrink-0"><Rows w={30} h={b ? 20 : 25} f={b ? [B, B, B] : [W, B, W, B]} /></svg>
);

/* ---------- header ---------- */
function Header() {
  return (
    <header className="flex h-[116px] shrink-0 flex-col border-b-[3px] border-[#c0c0c0] bg-[#f8f8f8]">
      <div className="flex h-[64px] items-center text-[#6a6a6a]">
        <svg width="370" height="64" viewBox="0 0 370 64" className="shrink-0" fill="none">
          <path d="M15 22h30v21H15z" fill="#3f97cf" /><path d="M24 42l9-13 12 13z" fill="#dceef8" /><path d="M38 32l7-3v14z" fill="#9cc99c" /><path d="M20 21v-3h8" stroke="#3f97cf" strokeWidth="2" /><circle cx="36" cy="22" r="5" fill="#fbe98c" stroke="#dcc030" strokeWidth="2" /><path d="M36 14v16M28 22h16" stroke="#dcc030" strokeWidth="1.500" />
          <path d="M72 23h27v20H72z" fill="#fff" stroke="#3f97cf" strokeWidth="2.500" /><path d="M79 22v-4h13v4" stroke="#3f97cf" strokeWidth="2" /><path d="M71 43l8-13h23l-3 13z" fill="#3f97cf" /><path d="M86 42l6-7 7 7z" fill="#cde9f8" />
          <path d="M130 23h28v20h-28z" fill="#cde5f3" stroke="#5e9fc8" strokeWidth="2.500" /><path d="M137 22v-4h13v4" stroke="#3f97cf" strokeWidth="2" /><path d="M128 28h18v18h-18z" fill="#fff" stroke="#8f7fbc" strokeWidth="3" /><path d="M131 39h13v7h-13z" fill="#555" />
          <path d="M190 20l-8 8 8 8M183 28h12c14 0 14 13 4 16" stroke="#3f97cf" strokeWidth="3.500" />
          <path d="M225 29l5 5 5-5M299 29l5 5 5-5" stroke="#333" strokeWidth="2.500" />
          <path d="M270 20l8 8-8 8M277 28h-12c-14 0-14 13-4 16" stroke="#b3d6ec" strokeWidth="3.500" />
          <path d="M343 26h14M344 33l6 6 6-6" stroke="#555" strokeWidth="2" />
        </svg>
        <div className="ml-[1300px] w-[131px] shrink-0 pt-[2px] text-[22px]">ArcGISPro</div>
        <div className="flex h-[46px] w-[360px] shrink-0 items-center rounded-md border-2 border-[#9a9a9a] bg-[#fcfcfc] pl-[14px] text-[22px] text-[#7a7a7a] italic">
          <Mag s={20} /><span className="ml-[14px] whitespace-nowrap">Command Search (Alt+Q)</span>
        </div>
        <div className="ml-[624px] w-[579px] shrink-0 pt-[2px] text-[22.200px] whitespace-nowrap">{"{R} - Escuela Colombiana de Ingeniería Julio Garavito"}</div>
        <div className="flex h-[48px] w-[48px] shrink-0 items-center justify-center rounded-full bg-[#161616] text-[13px] text-white">{"{R}"}</div>
        <svg width="24" height="32" viewBox="0 0 24 32" className="ml-[32px] shrink-0" fill="none" stroke="#555" strokeWidth="2"><path d="M2 25h20l-3-4v-8c0-5-3-8-7-8s-7 3-7 8v8zM12 5V1M9 29h6" /></svg>
        <div className="ml-[58px] w-5 text-center text-[27px]">?</div>
        <div className="ml-[66px] h-[2px] w-[22px] bg-[#555]" />
        <svg width="20" height="21" viewBox="0 0 20 21" className="ml-[67px] shrink-0" fill="none" stroke="#555" strokeWidth="2"><path d="M1 6h13v14H1zM5 6V1h14v14h-5" /></svg>
        <div className="ml-[66px]"><Cross s={22} /></div>
      </div>
      <nav className="flex h-[49px] items-center text-[23.300px] text-[#1c1c1c]">
        <div className="flex shrink-0 pt-[4px]">
          <span className="ml-[36px] w-[153px]">Project</span><span className="w-[116px]">Map</span><span className="w-[130px]">Insert</span><span className="w-[157px]">Analysis</span><span className="w-[119px]">View</span><span className="w-[109px]">Edit</span><span className="w-[159px]">Imagery</span><span className="w-[130px]">Share</span><span className="w-[125px]">Help</span>
        </div>
        <div className="flex h-[49px] w-[502px] shrink-0 items-center rounded-md border-2 border-[#dedede] bg-white pt-[4px] pl-[31px]">
          <span className="w-[222px] shrink-0">Feature Layer</span><span className="w-[163px] shrink-0">Labeling</span><span>Data</span>
        </div>
      </nav>
    </header>
  );
}

/* ---------- contents pane ---------- */
function Contents() {
  return (
    <aside className="ml-3 flex w-[623px] shrink-0 flex-col rounded-t-lg border-[2px] border-b-0 border-[#cfcfcf] bg-[#f8f8f8]">
      <div className="mt-[8px] flex h-[48px] items-center pl-[11px]">
        <span className="w-[505px] pt-[2px] text-[29.500px] text-[#1c1c1c]">Contents</span><Chev s={15} /><span className="w-[22px]" /><Pin /><span className="w-[18px]" /><Cross c="#333" />
      </div>
      <div className="mt-[10px] flex h-[48px] items-center pl-[6px]">
        <Funnel />
        <div className="ml-[14px] flex h-[48px] w-[566px] items-center border-[2px] border-[#8f8f8f] bg-white pl-[11px] text-[23.300px] text-[#555] italic">
          <span className="w-[476px] pt-[2px]">Search</span><Mag /><span className="w-[23px]" /><Chev />
        </div>
      </div>
      <svg width="480" height="60" viewBox="14 255 480 60" className="mt-[12px] shrink-0" fill="none" strokeWidth="2.200">
        <path d="M63 278v24h18M63 286h18" stroke="#666" /><path d="M55 263h14l3 14H52zM81 281h12l3 9H79zM81 296h12l3 9H79z" fill="#dcc84e" /><path d="M118 271v28c0 7 39 7 39 0v-28" fill="#e4e4e4" stroke="#777" /><ellipse cx="137.500" cy="271" rx="19.500" ry="6" fill="#fafafa" stroke="#777" />
        <path d="M184 266h37v38h-37z" fill="#fff" stroke="#666" /><path d="M185 267h11c8 14 6 20 11 36h-22z" fill="#b5e3f3" /><path d="M196 266c8 14 6 20 11 38M204 287c4-7 8-10 17-12" stroke="#666" />
        <path d="M249 303l5-13 24-24 6 6-24 24z" fill="#dcc84e" stroke="#a89338" strokeWidth="1.500" /><path d="M277 267l3-3 6 6-3 3z" fill="#e09a90" /><path d="M310 264h32v32h-32zM326 264v32M310 280h32" stroke="#777" /><path d="M342 283v25M330 296h25" stroke="#b8e2f3" strokeWidth="8" /><path d="M342 284v23M331 296h23" stroke="#3a80b0" strokeWidth="2.500" />
        <path d="M377 291l20-27 19 17-18 23-17-1z" fill="#ead98c" stroke="#a58c3a" /><circle cx="385" cy="294" r="4" fill="#fff" stroke="#a58c3a" /><path d="M390 280l10 10M395 275l10 10" stroke="#a58c3a" strokeWidth="1.500" />
        <path d="M438 307l12-20h20l12 20z" fill="#69b2dc" stroke="#666" /><path d="M452 300l12-13 10 20h-18z" fill="#d7eef8" /><path d="M445 269l6-6 8 7-6 6zM470 293l5-5 8 7-6 6z" fill="#fff" stroke="#555" /><path d="M453 281l9-10 11 9-9 10z" fill="#444" />
      </svg>
      <div className="ml-[29px] h-[6px] w-[80px] bg-[#0079c1]" />
      <div className="mt-[31px] ml-[29px] h-8 text-[22px] leading-8 font-bold tracking-[-1px] text-[#3f3f3f]">Dra</div>
      <div className="mt-[22px] flex items-center pl-[3px]">
        <svg width="14" height="12" viewBox="0 0 14 12"><path d="M14 0v12H0z" fill="#555" /></svg><span className="w-[9px]" /><MapIcon />
      </div>
      <div className="mt-[8px] flex h-[48px] items-center pl-[25px]">
        <svg width="14" height="12" viewBox="0 0 14 12"><path d="M14 0v12H0z" fill="#555" /></svg>
        <div className="ml-[6px] flex h-[48px] w-[200px] items-center border-2 border-[#4590c6] bg-[#c8dff0] pl-[1px]">
          <svg width="28" height="28" viewBox="0 0 28 28"><rect x="1" y="1" width="26" height="26" rx="4" fill="#fff" stroke="#777" strokeWidth="2" /><path d="M5 13l6 7 9-14" fill="none" stroke="#333" strokeWidth="3" /></svg>
        </div>
      </div>
      <div className="mt-[20px] ml-[60px] h-[3px] w-[30px] bg-[#333]" />
      <div className="mt-[36px] ml-[48px] h-[28px] w-[28px] rounded-[5px] border-2 border-[#8a8a8a] bg-white" />
    </aside>
  );
}

/* ---------- map view ---------- */
function MapPane() {
  return (
    <section className="flex h-[1210px] shrink-0 flex-col">
      <div className="flex h-[44px] shrink-0 items-center">
        <div className="flex h-[44px] w-[275px] shrink-0 items-center rounded-t-lg bg-[#0079cf] pt-[3px] pl-3 text-white">
          <MapIcon /><span className="ml-[10px] w-[186px] text-[22.800px]">NetworkAnalyst</span><Cross c="#cfe8fb" />
        </div>
        <div className="flex flex-1 items-center pt-[3px] pl-[11px] text-[23px] text-[#222]"><MapIcon /><span className="ml-[10px]">Test</span></div>
        <div className="mr-[10px]"><Chev c="#666" s={16} /></div>
      </div>
      <div className="h-[4px] shrink-0 bg-[#1278bc]" />
      <div className="h-[2px] shrink-0 bg-[#b6d5ea]" />
      <div className="flex h-[1109px] shrink-0 border-l-2 border-[#cfcfcf]"><StreetMap /></div>
      <div className="flex h-[49px] shrink-0 items-center border-r-2 border-b-[2px] border-l-2 border-[#cfcfcf] bg-[#f8f8f8] pt-[2px] pl-[9px] text-[23px]">
        <div className="flex h-[43px] w-[201px] shrink-0 items-center border-[2px] border-[#949494] bg-white pl-[12px] text-[#222]"><span className="w-[167px] text-[22px]">1:16,774</span><Caret /></div>
        <svg width="266" height="46" viewBox="859 1288 266 46" className="shrink-0" fill="none" strokeWidth="2">
          <path d="M868 1296v29M1120 1296v29" stroke="#999" />
          <path d="M882 1293h22v22h-22zM893 1293v22M882 1304h22" stroke="#777" /><path d="M904 1308v16M896 1316h16" stroke="#a6d8ee" strokeWidth="6" /><path d="M904 1308v16M896 1316h16" stroke="#3a80b0" />
          <path d="M924 1294h25v25h-25zM930 1294v25M936 1294v25M943 1294v25M924 1300h25M924 1306h25M924 1313h25" stroke="#888" strokeWidth="1.600" />
          <path d="M962 1322l14-8h16v8z" fill="#9fd2ec" /><path d="M962 1296h8v6h-8zM984 1309h8v6h-8zM982 1297h10M987 1293v9M962 1318h5v5h-5z" stroke="#666" /><path d="M970 1312l12-10" stroke="#4a97cc" strokeDasharray="4 2" strokeWidth="3" />
          <path d="M1001 1292h16v16h-16z" fill="#dcedd8" /><path d="M1017 1293v30M1001 1307h32" stroke="#666" strokeDasharray="3 2.500" /><path d="M1014 1304h7v7h-7z" fill="#888" />
          <path d="M1042 1315v-14l8 14v-14" stroke="#3f97cf" strokeWidth="3" /><path d="M1057 1292v31l15-17" stroke="#888" /><path d="M1062 1295c8 0 9 4 7 10m-4-4l4 5 4-4" stroke="#3f97cf" /><path d="M1088 1306l6 6 6-6" stroke="#222" strokeWidth="3.200" />
        </svg>
        <span className="ml-[564px] w-[352px] shrink-0 pt-[3px] text-[22.500px] whitespace-nowrap text-[#555]">4,889,072.68E 2,113,361.34N m</span>
        <Chev c="#666" s={17} w={4} />
        <div className="ml-[571px] h-[30px] w-[2px] bg-[#aaa]" />
        <div className="ml-[7px] flex h-[46px] w-[265px] shrink-0 items-center bg-white pl-[4px] text-[22.800px] text-[#444]">
          <TIcon k="mapzoom" /><span className="ml-[5px] whitespace-nowrap">Selected Features: 8</span>
        </div>
        <div className="ml-[8px] h-[30px] w-[2px] bg-[#aaa]" />
        <svg width="26" height="26" viewBox="0 0 26 26" className="ml-[17px] shrink-0" fill="none" stroke="#666" strokeWidth="2"><path d="M2 2h22v22H2zM6 3c2 8 7 8 7 21M13 13c3-4 5-5 10-5" /></svg>
        <div className="ml-[17px] h-[30px] w-[2px] bg-[#aaa]" />
        <div className="ml-[15px] h-[28px] w-[8px] bg-[#666]" /><div className="ml-[6px] h-[28px] w-[8px] bg-[#666]" />
        <div className="ml-[17px] h-[30px] w-[2px] bg-[#aaa]" />
        <div className="ml-[10px] shrink-0"><Refresh /></div>
      </div>
    </section>
  );
}

/* ---------- attribute table ---------- */
const lengths = ["304.194727", "441.086815", "262.055171", "841.023147", "107.43444", "717.069377", "7.909958", "749.228963"];
const gridCols = "grid grid-cols-[53px_503px_320px_194px_188px_135px_46px_319px_147px_192px_105px_150px_38px]";
const hcell = "border-r-2 border-[#dadada] px-[10px] pt-[3px] flex items-center overflow-hidden whitespace-nowrap";
const cell = "border-r-2 border-b-[3px] border-[#c6cccc] bg-[#8cffff] px-[10px] pt-[4px] flex items-center overflow-hidden whitespace-nowrap";
const num = "border-r-2 border-b-[3px] border-[#c6cccc] bg-[#8cffff] px-[10px] pt-[4px] flex items-center justify-end overflow-hidden whitespace-nowrap";

function Table() {
  return (
    <section className="mt-[11px] flex min-h-0 flex-1 flex-col">
      <div className="flex h-[44px] shrink-0 items-center justify-between">
        <div className="flex h-[45px] w-[254px] items-center rounded-t-lg bg-[#d1d3d7] pt-[2px] pl-[11px] text-[23px] text-[#4c4c4c]">
          <svg width="30" height="27" viewBox="0 0 30 27" className="shrink-0"><path d="M1 1h28v25H1z" fill="#fff" /><path d="M1 8h28M1 14h28M1 20h28M8 7v19M15 7v19M22 7v19M1 1h28v25H1z" fill="none" stroke="#666" strokeWidth="2" /><path d="M1 1h28v6H1z" fill="#3f8fc8" /></svg>
          <span className="ml-[13px] w-[166px] pt-[2px] text-[23px]">T25899EjeVial</span><Cross />
        </div>
        <div className="mr-[10px]"><Chev c="#666" s={16} /></div>
      </div>
      <div className="h-[5px] shrink-0 bg-[#d1d3d7]" />
      <div className="flex min-h-0 flex-1 flex-col border-x-2 border-[#d4d4d4] bg-[#f8f8f8] px-[3px] pt-[3px]">
        <div className="flex h-[60px] shrink-0 items-center border-[2px] border-[#bbbdc2] bg-[#eef0f2] pl-[9px] text-[23px] font-bold text-[#444]">
          <span className="w-[77px] pt-[2px] text-[22px]">Field:</span><Sheet /><span className="w-[20px]" /><Sheet minus />
          <div className="mr-[14px] ml-[20px] h-[44px] w-[2px] bg-[#cfcfcf]" />
          <span className="w-[127px] shrink-0 pt-[2px] text-[22px]">Selection:</span>
          <div className="flex w-[303px] shrink-0 justify-between pr-[10px]"><TIcon k="map" /><TIcon k="zoom" /><TIcon k="switch" /><TIcon k="rows" /><TIcon k="del" /><TIcon k="copy" /></div>
          <div className="ml-[8px] h-[44px] w-[2px] bg-[#b4b4b4]" />
          <span className="ml-[15px] w-[156px] shrink-0 pt-[2px] text-[22px]">Highlighted:</span>
          <div className="flex w-[346px] shrink-0 justify-between"><TIcon k="down" faded /><TIcon k="down" faded /><TIcon k="zoom" faded /><TIcon k="switchY" /><TIcon k="rowsB" faded /><TIcon k="delY" faded /><TIcon k="copyY" faded /></div>
          <div className="mr-[12px] ml-auto"><Burger /></div>
        </div>
        <div className="mt-[3px] flex h-[535px] shrink-0 flex-col border-2 border-[#c9c9c9] bg-[#ebebeb]">
          <div className="flex h-[489px]">
            <div className="h-[489px] w-[2390px] overflow-hidden">
              <div className={gridCols + " h-[57px] border-b-2 border-[#c6cccc] text-[22.500px] font-bold text-[#444]"}>
                <div className="flex items-end justify-end bg-[#f8f8f8] p-[8px]"><svg width="23" height="23" viewBox="0 0 23 23"><path d="M23 0v23H0z" fill="#c2c2c2" /></svg></div>
                <div className={hcell}>Name</div>
                <div className={hcell + " justify-between !pr-[6px]"}>Class<svg width="17" height="10" viewBox="0 0 17 10"><path d="M8.500 0L17 10H0z" fill="#444" /></svg></div>
                <div className={hcell}>kph</div><div className={hcell}>Hierarchy</div><div className={hcell + " !border-r-[#888] border-r"}>Oneway</div><div className={hcell} />
                <div className={hcell}>ORDEN_VIAL</div><div className={hcell + " justify-end tracking-[0.800px]"}>PerfilNum</div><div className={hcell}>Shape_Length</div>
                <div className={hcell + " border-b-[5px] !border-b-[#0079c1] bg-[#c7e0f4] !pt-[7px]"}><span className="tracking-[0.600px]">Meters</span></div>
                <div className={hcell}><span className="tracking-[0.200px]">Func_Class</span></div><div className={hcell + " border-r-0"}>FT</div>
              </div>
              {lengths.map((len, i) => (
                <div key={len} className={gridCols + " h-[56.500px] text-[23px] text-[#3d4f52]"}>
                  <div className={i === 0 ? "flex items-center border-r-4 border-b-2 border-r-[#0079c1] border-b-[#d4d4d4] bg-[#c7e0f4] pt-[3px] pl-[9px]" : "flex items-center border-r-2 border-b-2 border-[#d4d4d4] pt-[3px] pl-[9px] text-[#444]"}>{i + 1}</div>
                  <div className={cell}><span className="tracking-[0.600px]">CARRERA 11</span></div><div className={cell}>Carrera</div><div className={num}>30</div><div className={num}>2</div>
                  <div className={cell + " !border-r-[#6f9a9a]"}>FT</div><div className={cell} /><div className={cell}>Vía Urbana</div><div className={num}>0</div>
                  <div className={num}><span className="tracking-[0.400px]">{len}</span></div><div className={i === 0 ? num + " !bg-[#c7e0f4]" : num}><span className="tracking-[1.200px]">&lt;Null&gt;</span></div><div className={num}><span className="tracking-[1.200px]">&lt;Null&gt;</span></div><div className={cell} />
                </div>
              ))}
            </div>
            <div className="flex flex-1 flex-col items-center pt-[14px]">
              <Chev up c="#666" s={16} /><div className="mt-[14px] h-[346px] w-[21px] rounded-full bg-[#b3b3b3]" />
              <div className="mt-auto mb-[12px]"><Chev c="#666" s={16} /></div>
            </div>
          </div>
          <div className="flex flex-1 items-center pl-[11px]">
            <Chev left c="#666" s={16} /><div className="ml-[1213px] h-[22px] w-[922px] rounded-full bg-[#b3b3b3]" /><div className="ml-[198px]"><Chev right c="#666" s={16} /></div>
          </div>
        </div>
        <div className="flex min-h-0 flex-1 items-center pt-[4px] text-[22.600px] text-[#444]">
          <div className="ml-[13px]"><ViewIcon /></div>
          <div className="ml-[21px] flex h-[44px] w-[64px] shrink-0 items-center justify-center border-[3px] border-[#4ca3d6] bg-[#c3c5c9]"><ViewIcon b /></div>
          <svg width="74" height="24" viewBox="0 0 74 24" className="ml-[15px] shrink-0"><path d="M4 2v20" stroke="#b8b8b8" strokeWidth="2.500" /><path d="M20 2v20L7 12z" fill="#b8b8b8" /><path d="M51 2v20l14-10z" fill="#555" /><path d="M68 2v20" stroke="#555" strokeWidth="2.500" /></svg>
          <span className="ml-[20px] shrink-0 pt-[2px] tracking-[0.200px]">8 of 1,548 selected</span>
          <span className="mr-[9px] ml-auto pt-[2px]">Filters:</span>
          <div className="flex h-[47px] w-[84px] items-center justify-around bg-[#eceef0]">
            <svg width="68" height="32" viewBox="0 0 68 32" fill="none" stroke="#d6dcdc" strokeWidth="2.500"><circle cx="14" cy="16" r="13" /><path d="M14 7v11h7" stroke="#c6dbe5" /><circle cx="53" cy="17" r="12" /><path d="M42 4v14M49 1v12M57 1v12M48 26c1-9 12-3 10-12" stroke="#ccdcd6" /></svg>
          </div>
          <svg width="120" height="34" viewBox="0 0 120 34" className="ml-[7px] shrink-0" fill="none"><path d="M2 2h25v3l-9 10v15h-6V15L2 5z" fill="#aaa" stroke="#666" strokeWidth="2" /><path d="M17 17h15v14H17z" fill="#fff" /><path d="M18 18h4v4h-4zM24 18h4v4h-4zM30 18h4v4h-4zM18 25h4v4h-4zM24 25h4v4h-4zM30 25h4v4h-4z" fill="#3f97cf" /><path d="M38 3v28" stroke="#aaa" strokeWidth="2" /><path d="M63 5v12" stroke="#3f8f4f" strokeWidth="5" /><path d="M54 11l9-10 9 10z" fill="#3f8f4f" /><path d="M63 17v12" stroke="#e09a3a" strokeWidth="5" /><path d="M54 23l9 10 9-10z" fill="#e09a3a" /><path d="M102 17h13" stroke="#555" strokeWidth="4" /></svg>
          <div className="ml-[9px] flex h-[34px] w-[201px] items-center"><div className="h-[7px] w-[107px] bg-[#777]" /><div className="h-[28px] w-[5px] bg-[#666]" /><div className="h-[7px] w-[89px] bg-[#dcdcdc]" /></div>
          <svg width="18" height="18" viewBox="0 0 18 18" className="ml-[12px] shrink-0"><path d="M9 0v18M0 9h18" stroke="#555" strokeWidth="4" /></svg>
          <div className="ml-[13px] flex h-[46px] w-[120px] items-center bg-white pl-[13px] text-[#222]"><span className="w-[87px]">119 %</span><Caret /></div>
          <div className="ml-[11px] h-[30px] w-[2px] bg-[#aaa]" />
          <div className="mr-[8px] ml-[13px]"><Refresh /></div>
        </div>
      </div>
    </section>
  );
}

/* ---------- symbology pane ---------- */
const symbols = [
  ["Double\nLine", "dbl"], ["Double,\nGraded", "dblg"], ["Triple Line", "tri"], ["Triple,\nGraded", "trig"],
  ["Triple,\nCenter", "tric"], ["Triple\nYell...", "yel"], ["Single,\nNautic...", "naut1"], ["Double,\nNautic...", "naut2"],
  ["No Border", ""], ["Line with 2\nMarkers", "m2"], ["Offset Lines", "off"], ["Line with 1\nMarker", "m1"],
  ["Extent\nLeader", "l1"], ["Extent\nLead...", "l2"], ["Extent\nLeader Gray", "l3"], ["Extent\nLeader...", "l4"],
  ["Extent\nLead...", "y1"], ["Extent\nLead...", "y2"], ["Arrow Line\n1", "a1"], ["Arrow Line\n1 (Mid)", "a1m"],
  ["Arrow Line\n2", "a2"], ["Arrow Line\n2 (Mid)", "a2m"], ["Arrow Line\n3", "a3"], ["Arrow Line\n3 (Mid)", "a3m"],
  ["Arrow Line\n4", "a4"], ["Arrow Line\n5", "a5"], ["Arrow Line\n6", "a4"], ["Arrow Line\n7", "a7"],
  ["Arrow Line\n8", "a2"], ["Arrow Line\n9", "a9"], ["Arrow Line\n10", "a10"], ["Arrow Line\n11", "a11"],
  ["Arrow Line\n2 (Along)", "a2m"], ["Dashed\nArrow 1", "d1"], ["Arrow Line\n3 (Along)", "a3a"], ["Dashed\nArrow...", "d2"],
  ["", "e1"], ["", "e2"], ["", "e3"], ["", "e4"],
];
const L = ({ c, w, x1 = -33, x2 = 33, y = 0, dash, cap }) => <path d={`M${x1} ${y}H${x2}`} stroke={c} strokeWidth={w} strokeDasharray={dash} strokeLinecap={cap} fill="none" />;
const Head = ({ x = 32, s = 1, c = "#333" }) => <path d={`M${x} 0L${x - 16 * s} ${-8 * s}L${x - 11 * s} 0L${x - 16 * s} ${8 * s}Z`} fill={c} />;
const Open = ({ x = 32, w = 2.5, c = "#444", s = 1 }) => <path d={`M${x - 16 * s} ${-14 * s}L${x} 0L${x - 16 * s} ${14 * s}`} fill="none" stroke={c} strokeWidth={w} />;
const art = {
  dbl: <><L c="#ccc" w={2} y={-4} /><L c="#ccc" w={2} y={3} /></>,
  dblg: <><L c="#bbb" w={9} y={0} x1={-35} x2={35} /><L c="#000" w={7} y={-1.5} x1={-35} x2={35} /></>,
  tri: <L c="#dcdcdc" w={12} />,
  trig: <><L c="#d0d0d0" w={4} y={-5} /><L c="#222" w={3} y={-1} /><L c="#000" w={5} y={4} x1={-35} x2={35} /></>,
  tric: <><L c="#ccc" w={11} /><L c="#000" w={5} x1={-35} x2={35} /></>,
  yel: <><L c="#bdb98a" w={8} x1={-36} x2={36} /><L c="#8c8856" w={4} /></>,
  naut1: <><L c="#bbb" w={2} y={-5} /><L c="#bbb" w={2} y={5} /><path d="M-24-4h16v8h-16zM8-4h16v8H8z" fill="#000" /></>,
  naut2: <><L c="#ccc" w={2} y={-7} /><L c="#ccc" w={2} y={7} /><path d="M-32-6h14v6h-14zM-16 0h16v6h-16zM-5-6H8v6H-5zM17 0h15v6H17zM24-6h8v6h-8z" fill="#000" /></>,
  m2: <><L c="#444" w={3} /><circle cx="-16" r="6.500" /><rect x="9" y="-6.500" width="14" height="13" fill="#0a4fa8" /></>,
  off: <><L c="#e9c4fa" w={10} y={-2} x1={-35} x2={35} /><L c="#d77df0" w={5} y={2} x1={-35} x2={35} /></>,
  m1: <><L c="#444" w={3} x2={-10} /><L c="#444" w={3} x1={10} /><circle r="5.500" /></>,
  l1: <L c="#444" w={3.5} />, l2: <L c="#000" w={8} cap="round" />, l3: <L c="#c6c6c6" w={3} />, l4: <L c="#b5b5b5" w={8} cap="round" />,
  y1: <L c="#ffffd8" w={4} />, y2: <L c="#ffffbe" w={8} cap="round" />,
  a1: <><L c="#555" w={3} x2={22} /><path d="M31 0L20-9V9z" fill="#333" /></>,
  a1m: <><L c="#555" w={3} /><path d="M12 0L-1-10V10z" fill="#333" /></>,
  a2: <><L c="#999" w={2.5} x2={24} /><Head /></>,
  a2m: <><L c="#999" w={2.5} /><Head x={9} /></>,
  a3: <><L c="#555" w={3} x2={31} /><Open /></>,
  a3m: <><L c="#222" w={3.5} /><Open x={12} /></>,
  a4: <><L c="#555" w={3} x2={22} /><path d="M32 0L16-8l2 8-2 8z" fill="#333" /></>,
  a5: <><L c="#222" w={4} x2={24} /><Head s={1.3} /></>,
  a7: <><L c="#555" w={3} x2={26} /><path d="M32 0L14-14 23 0l-9 14z" fill="#333" /></>,
  a9: <><L c="#222" w={4} x2={28} /><Open w={6} x={29} c="#333" s={0.8} /></>,
  a10: <><L c="#555" w={3} x2={20} /><path d="M32 0L12-9l5 9-5 9z" fill="#333" /></>,
  a11: <><L c="#999" w={2.5} x2={26} /><path d="M32 0L12-11 20 0" fill="#fff" stroke="#999" /><path d="M32 0H20l-8 11z" fill="#333" /></>,
  d1: <><L c="#999" w={3} dash="11 8" x2={24} /><Head /></>,
  a3a: <><L c="#aaa" w={2.5} x2={31} /><Open s={0.6} c="#777" /><path d="M-41-8l9 8-9 8" fill="none" stroke="#777" strokeWidth="2" /></>,
  d2: <><L c="#333" w={5} dash="0 11" cap="round" x2={18} /><Open x={26} s={0.85} /></>,
  e1: <><L c="#333" w={6} dash="0 11" cap="round" x2={12} /><Head s={1.1} /></>,
  e2: <><L c="#333" w={6} x2={-12} /><Head x={-10} s={1.3} /><L c="#333" w={6} x1={-6} x2={14} /></>,
  e3: <><L c="#999" w={2.5} /><Head x={8} /></>,
  e4: <><L c="#222" w={5} /><Head x={-10} s={1.4} /><Head s={1.4} /></>,
};

function Symbology() {
  return (
    <aside className="ml-[14px] flex w-[718px] shrink-0 flex-col">
      <div className="flex h-[1884px] shrink-0 flex-col rounded-tl-lg border-t-2 border-l-2 border-[#cfcfcf] bg-[#f8f8f8] pt-[8px] pl-[10px]">
        <div className="flex h-[48px] items-center text-[#1c1c1c]">
          <span className="w-[607px] pt-[2px] text-[28.900px]">Symbology - T25899EjeVial</span><Chev s={15} /><span className="w-[22px]" /><Pin /><span className="w-[18px]" /><Cross c="#333" />
        </div>
        <div className="flex h-[48px] items-center text-[#555]">
          <svg width="36" height="36" viewBox="0 0 36 36" className="shrink-0" fill="none" stroke="#666" strokeWidth="2.500"><circle cx="18" cy="18" r="16" /><path d="M27 18H10M17 10l-8 8 8 8" strokeWidth="4" /></svg>
          <span className="ml-[46px] w-[583px] pt-[3px] text-[28.800px] whitespace-nowrap">{"Format Line Symbol - <all other values>"}</span><Burger />
        </div>
        <div className="mt-[8px] flex h-[54px] text-[23.200px] text-[#4c4c4c]">
          <span className="ml-[2px] h-[48px] border-b-4 border-[#0079c1] leading-[48px] font-bold">Gallery</span><span className="ml-[20px] leading-[48px]">Properties</span>
        </div>
        <div className="mt-[18px] flex h-[47px] text-[23px]">
          <div className="flex w-[540px] items-center border-[2px] border-[#8f8f8f] bg-white pl-[11px] text-[#4c4c4c] italic"><span className="w-[448px]">Type here to search</span><Mag s={24} /><span className="w-[24px]" /><Chev c="#222" s={15} /></div>
          <div className="ml-[29px] flex w-[131px] items-center border-[2px] border-[#8f8f8f] bg-white pl-[5px] whitespace-nowrap text-[#222]"><span className="w-[104px] text-[23px]">All styles</span><Caret /></div>
        </div>
        <div className="mt-[7px] flex h-[46px] items-center text-[23px] text-[#555]">
          <span className="w-[613px]">Symbols found: 140</span>
          <svg width="34" height="28" viewBox="0 0 34 28" className="shrink-0"><path d="M2 12C3 1 26-1 27 8c0 4-6 1-8 5 0 6-4 9-8 8C5 20 2 17 2 12z" fill="#fff" stroke="#666" strokeWidth="2" /><circle cx="9" cy="9" r="2" fill="#4a97cc" /><circle cx="15" cy="6" r="2" fill="#5a5" /><circle cx="9" cy="15" r="2" fill="#d54" /><path d="M15 19l14-11 3 2-13 12z" fill="#777" /><path d="M8 27c5 0 5-9 9-7s2 7-9 7z" fill="#c58a4a" /></svg>
          <span className="w-[17px]" /><Funnel />
        </div>
        <div className="mt-[6px] flex h-[1591px] w-[700px] shrink-0 overflow-hidden border-[2px] border-[#bdbdbd] bg-white">
          <div className="h-[1587px] w-[662px] overflow-hidden">
            <div className="grid auto-rows-[172.200px] grid-cols-[repeat(4,140px)] pl-[20px]">
              {symbols.map(([name, k], i) => (
                <div key={i} className="flex flex-col items-center">
                  <svg width="90" height="71" viewBox="-45 -35.500 90 71" className="shrink-0">{art[k]}</svg>
                  <div className="mt-[13px] text-center text-[23.200px] leading-8 whitespace-pre text-[#555]">{name}</div>
                </div>
              ))}
            </div>
          </div>
          <div className="flex flex-1 flex-col items-center bg-[#ebebeb] pt-[10px]">
            <Chev up c="#666" s={15} /><div className="mt-[343px] h-[202px] w-[18px] rounded-full bg-[#b3b3b3]" />
            <div className="mt-auto mb-[9px]"><Chev c="#666" s={15} /></div>
          </div>
        </div>
      </div>
      <div className="flex flex-1 items-center border-t-2 border-[#cfcfcf] pl-[11px] text-[22.800px] text-[#555]">
        <span className="w-[94px]">Catalog</span>
        <span className="flex h-[40px] w-[142px] items-center justify-center rounded-b-md bg-[#f8f8f8] text-[#0079c1]">Symbology</span>
        <span className="ml-[14px]">Label Class</span>
      </div>
    </aside>
  );
}

/* ---------- dialogs ---------- */
const Combo = ({ className, children }) => (
  <div className={"flex h-[44px] shrink-0 items-center justify-between border-[2px] border-[#929292] bg-white pr-[10px] pl-[8px] text-[#222] " + className}>
    <span>{children}</span><Chev c="#666" s={11} />
  </div>
);
const Btn = ({ primary, children }) => (
  <div className={primary ? "flex h-[49px] w-[140px] items-center justify-center border-[3px] border-[#1a78b8] bg-white pt-[2px]" : "flex h-[49px] w-[140px] items-center justify-center border-[3px] border-[#444] bg-white pt-[2px]"}>{children}</div>
);
const Pick = ({ className, children }) => (
  <div className={"flex h-[49px] shrink-0 items-center justify-between overflow-hidden border-[2px] border-[#929292] bg-white pr-[8px] text-[22.500px] text-[#222] " + className}>
    <span className="overflow-hidden pt-[2px] whitespace-nowrap">{children}</span><Caret />
  </div>
);

function SelectDialog() {
  return (
    <div className="absolute top-[316px] left-[81px] flex h-[859px] w-[871px] flex-col rounded-[16px] border-[2.500px] border-[#1a78b8] bg-[#f8f8f8] pl-[35px] text-[23px] text-[#555]">
      <div className="-ml-[20px] flex h-[52px] shrink-0 items-center">
        <span className="w-[755px] text-[27.300px] text-[#1a70ae]">Select By Attributes</span><span className="w-[22px] text-[30px] text-[#888]">?</span><span className="w-[38px]" /><Cross c="#777" s={19} />
      </div>
      <div className="mt-[23px] h-[29px] leading-[31px]">Input Rows</div>
      <div className="flex items-center"><Combo className="w-[763px]">T25899EjeVial</Combo><span className="w-[14px]" /><Folder /></div>
      <div className="mt-[20px] h-[30px] leading-[31px]">Selection Type</div>
      <Combo className="w-[816px]">New selection</Combo>
      <div className="mt-[20px] h-[32px] leading-[31px]">Expression</div>
      <div className="mt-[17px] flex h-[32px] items-center"><Folder /><span className="ml-[10px] w-[88px]">Load</span><Floppy /><span className="ml-[12px] w-[89px]">Save</span><Cross c="#c9613f" s={19} w={3.8} /><span className="ml-[17px]">Remove</span></div>
      <div className="mt-[34px] flex h-[32px] items-center">
        <svg width="106" height="28" viewBox="0 0 106 28" fill="none" strokeWidth="2"><path d="M1 1h30v26H1zM36 1h30v26H36z" stroke="#bbb" fill="#f4f8fb" /><path d="M4 5h24M16 10h12M16 14h12M16 18h12M4 23h24M39 5h24M51 10h12M51 14h12M51 18h12M39 23h24" stroke="#b3d9ee" /><path d="M14 14H4m4-4l-4 4 4 4M38 14h10m-4-4l4 4-4 4" stroke="#aaa" /><path d="M83 14l6 7L102 6" stroke="#5aa05a" strokeWidth="4" /></svg>
        <span className="ml-[548px] w-[52px] pt-[3px] text-[22.500px]">SQL</span><Toggle /><span className="w-[17px]" /><Gear />
      </div>
      <div className="mt-[9px] flex h-[156px] w-[816px] flex-col border-[2.500px] border-[#767676] p-[4px]">
        <div className="h-[76px] w-[805px] shrink-0 border-2 border-[#dcdcdc]">
          <div className="flex h-[72px] w-[801px] items-center border-[2.500px] border-[#767676] border-l-[2.500px]">
            <div className="h-[67px] w-[9px] bg-[#d4d4d4]" /><span className="ml-[9px] w-[99px] pt-[2px] text-[22.800px] text-[#444]">Where</span>
            <Pick className="w-[229px] pl-[5px]">Name</Pick><Pick className="ml-[10px] w-[141px] pl-[5px]">is equal tc</Pick><Pick className="ml-[9px] w-[229px] pl-[10px]">CARRERA 11</Pick><span className="w-[20px]" /><Cross c="#c9613f" s={19} w={3.5} />
          </div>
        </div>
        <div className="flex flex-1 items-center justify-center pt-[8px]"><svg width="24" height="24" viewBox="0 0 24 24"><path d="M12 0v24M0 12h24" stroke="#67a867" strokeWidth="4" /></svg><span className="ml-[15px]">Add Clause</span></div>
      </div>
      <div className="mt-[30px] flex items-center"><div className="h-[27px] w-[27px] rounded-[5px] border-2 border-[#929292] bg-white" /><span className="ml-[12px] pt-[2px] text-[22.800px]">Invert Where Clause</span></div>
      <div className="mt-auto mb-[17px] flex gap-[18px] pl-[516px]"><Btn primary>Apply</Btn><Btn>OK</Btn></div>
    </div>
  );
}

const List = ({ items, thumb }) => (
  <div className="flex h-[301px] w-[389px] shrink-0 border-[2px] border-[#b9bbbd] bg-white text-[22.800px] text-[#222]">
    <div className="h-[297px] flex-1 overflow-hidden pl-[9px]">{items.map((t) => <div key={t} className="h-10 leading-[41px]">{t}</div>)}</div>
    <div className="flex w-[34px] flex-col items-center bg-[#ebebeb] pt-[11px]">
      <Chev up c="#666" s={13} /><div className={"mt-[15px] w-[18px] shrink-0 rounded-full bg-[#b3b3b3] " + thumb} /><div className="mt-auto mb-[11px]"><Chev c="#666" s={13} /></div>
    </div>
  </div>
);

function CalcDialog() {
  return (
    <div className="absolute top-[171px] left-[2164px] flex h-[1120px] w-[898px] flex-col rounded-[16px] border-[2.500px] border-[#1a78b8] bg-[#f8f8f8] text-[23px] text-[#555]">
      <div className="flex h-[65px] shrink-0 items-center pb-[16px] pl-[15px]">
        <span className="w-[784px] text-[27.300px] text-[#1a70ae]">Calculate Field</span><span className="w-[22px] text-[30px] text-[#888]">?</span><span className="w-[36px]" /><Cross c="#777" s={19} />
      </div>
      <div className="flex h-[52px] shrink-0 items-center bg-[#dceef9] pl-[25px] text-[#1a6499]">
        <svg width="25" height="25" viewBox="0 0 25 25"><circle cx="12.500" cy="12.500" r="12" fill="#4ea0d6" /><path d="M12.500 5v3.500M9.500 11h4v7M9 19h8" stroke="#fff" strokeWidth="3" fill="none" /></svg>
        <span className="ml-[33px] w-[779px] pt-[2px] text-[22.700px]">This tool modifies the Input Table</span><Cross c="#777" s={18} />
      </div>
      <div className="flex h-[907px] shrink-0">
        <div className="flex w-[860px] flex-col pl-[35px]">
          <div className="mt-[9px] h-[31px] leading-[31px]">Input Table</div>
          <div className="flex items-center"><Combo className="w-[758px]">T25899EjeVial</Combo><span className="w-[13px]" /><Folder /></div>
          <div className="mt-[9px] flex h-[32px] items-center pl-[10px] text-[22.700px] text-[#222]"><Toggle on /><span className="ml-[14px]">Use the selected records: 8</span></div>
          <div className="mt-[30px] h-[31px] text-[22.700px] leading-[31px]">Field Name (Existing or New)</div>
          <div className="flex items-center"><Combo className="w-[761px]">Oneway</Combo><span className="w-[9px]" /><Gear /></div>
          <div className="mt-[20px] h-[30px] leading-[31px]">Expression Type</div>
          <Combo className="w-[810px]">Python</Combo>
          <div className="mt-[19px] h-[34px] leading-[34px]">Expression</div>
          <div className="mt-[17px] flex h-[34px] items-center pl-[10px]"><span className="w-[354px]">Fields</span><Funnel /><span className="ml-[18px] w-[354px]">Helpers</span><Funnel /></div>
          <div className="mt-[18px] flex gap-[11px] pl-[10px]">
            <List thumb="h-[73px]" items={["Name", "Class", "kph", "Hierarchy", "Oneway", "OBJECTID", "Shape", "TIPO"]} />
            <List thumb="h-[42px]" items={[".as_integer_ratio()", ".capitalize()", ".center()", ".conjugate()", ".count()", ".decode()", ".denominator()", ".encode()"]} />
          </div>
          <div className="mt-[10px] flex h-[44px] items-center pl-[10px]">
            <div className="flex h-[44px] w-[389px] items-center justify-between border-[2px] border-[#b9bbbd] bg-[#eef0f2] pr-[8px] pl-[9px] text-[#858585]">Insert Values<Caret /></div>
            <div className="ml-[11px] grid grid-cols-[48px_48px_48px_48px_48px] pt-[4px] text-center text-[22px]"><span>*</span><span>/</span><span>+</span><span>-</span><span>=</span></div>
          </div>
          <div className="mt-[9px] h-[32px] pl-[10px] leading-[32px]">Oneway =</div>
          <div className="mt-[8px] ml-[10px] h-[45px] w-[789px] border-[2px] border-[#929292] bg-white pl-[1px] font-['DejaVu_Sans_Mono',monospace] text-[21.500px] leading-[35px] text-[#e01010]">"FT"</div>
        </div>
        <div className="flex flex-1 flex-col items-center bg-[#ebebeb] pt-[10px]">
          <Chev up c="#666" s={14} /><div className="mt-[14px] h-[517px] w-[18px] rounded-full bg-[#b3b3b3]" /><div className="mt-auto mb-[10px]"><Chev c="#666" s={14} /></div>
        </div>
      </div>
      <div className="mt-[26px] flex items-center pl-[361px]"><span className="w-[143px] pt-[4px]">Enable Undo</span><Toggle /><span className="w-[22px]" /><Btn primary>Apply</Btn><span className="w-[18px]" /><Btn>OK</Btn></div>
    </div>
  );
}

export default function App() {
  return (
    <div className="relative flex h-[2052px] w-[3820px] flex-col overflow-hidden bg-[#ebebeb] font-['Open_Sans','Noto_Sans',sans-serif] text-[23px] leading-tight">
      <Header />
      <div className="flex min-h-0 flex-1 pt-[11px]">
        <Contents />
        <main className="ml-[12px] flex w-[2443px] shrink-0 flex-col"><MapPane /><Table /></main>
        <Symbology />
      </div>
      <SelectDialog />
      <CalcDialog />
    </div>
  );
}
